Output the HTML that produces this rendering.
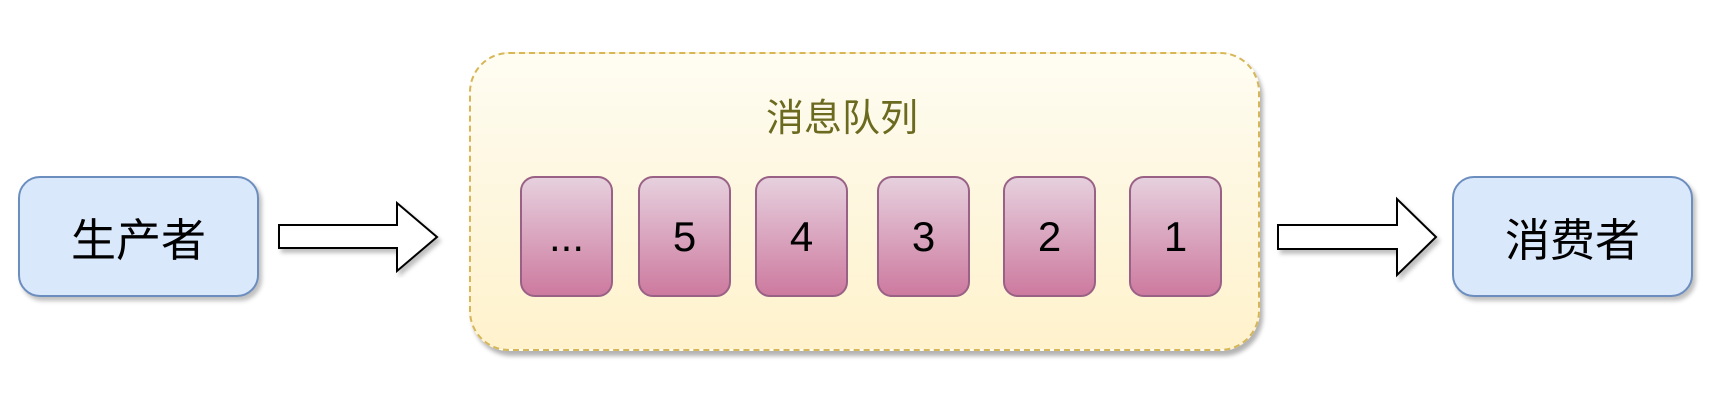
<!DOCTYPE html>
<html><head><meta charset="utf-8"><style>
body{margin:0;width:1732px;height:416px;background:#fff;position:relative;overflow:hidden;font-family:"Liberation Sans","Noto Sans CJK SC",sans-serif}
.b{position:absolute;box-sizing:border-box;display:flex;align-items:center;justify-content:center}
.side{top:176px;height:121px;width:241px;background:#dae8fc;border:2px solid #6c8ebf;border-radius:22px;font-size:45px;box-shadow:3px 4px 4px rgba(0,0,0,.25)}
.q{left:469px;top:52px;width:791px;height:299px;border:2px dashed #d6b656;border-radius:40px;background:linear-gradient(#fffdf3 0%,#fef8e4 35%,#fff2cc 100%);box-shadow:3px 5px 4px rgba(0,0,0,.3)}
.c{top:176px;height:121px;width:93px;background:linear-gradient(#e6d0de,#cd7a9f);border:2px solid #996185;border-radius:15px;font-size:42px}
</style></head><body>
<div class="b side" style="left:18px">生产者</div>
<div class="b side" style="left:1452px">消费者</div>
<div class="b q"></div>
<div style="position:absolute;left:766px;top:87px;font-size:38px;color:#6b6a1f">消息队列</div>
<div class="b c" style="left:520px">...</div>
<div class="b c" style="left:638px">5</div>
<div class="b c" style="left:755px">4</div>
<div class="b c" style="left:877px">3</div>
<div class="b c" style="left:1003px">2</div>
<div class="b c" style="left:1129px">1</div>
<svg width="1732" height="416" style="position:absolute;left:0;top:0">
<defs><filter id="s"><feDropShadow dx="3" dy="4" stdDeviation="2" flood-opacity=".25"/></filter></defs>
<path d="M279 225H397V203L437 237L397 271V248H279Z" fill="#fff" stroke="#000" stroke-width="2" filter="url(#s)"/>
<path d="M1278 225H1397V199L1436 237L1397 275V249H1278Z" fill="#fff" stroke="#000" stroke-width="2" filter="url(#s)"/>
</svg>
</body></html>
